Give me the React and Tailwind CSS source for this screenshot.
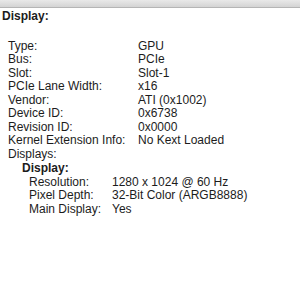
const rows = [
  ["Type:", "GPU"],
  ["Bus:", "PCIe"],
  ["Slot:", "Slot-1"],
  ["PCIe Lane Width:", "x16"],
  ["Vendor:", "ATI (0x1002)"],
  ["Device ID:", "0x6738"],
  ["Revision ID:", "0x0000"],
  ["Kernel Extension Info:", "No Kext Loaded"],
];

const displayRows = [
  ["Resolution:", "1280 x 1024 @ 60 Hz"],
  ["Pixel Depth:", "32-Bit Color (ARGB8888)"],
  ["Main Display:", "Yes"],
];

export default function App() {
  return (
    <div className="w-[300px] h-[300px] bg-white overflow-hidden text-[12px] leading-[13.5px] text-[#1c1c1c] font-['Liberation_Sans',Arial,sans-serif]">
      {/* window chrome strip */}
      <div className="h-[8px] bg-gradient-to-b from-[#e9e9e9] to-[#d4d4d4] border-b border-[#b5b5b5]" />

      <div className="pl-[2px] pt-[2px] font-bold">Display:</div>

      <div className="mt-[16px] pl-[8px]">
        {rows.map(([label, value]) => (
          <div key={label} className="flex">
            <span className="w-[130px] shrink-0">{label}</span>
            <span>{value}</span>
          </div>
        ))}
        <div>Displays:</div>
        <div className="pl-[14px] pt-[1px] font-bold">Display:</div>
        <div className="pl-[21px]">
          {displayRows.map(([label, value]) => (
            <div key={label} className="flex">
              <span className="w-[83px] shrink-0">{label}</span>
              <span>{value}</span>
            </div>
          ))}
        </div>
      </div>
    </div>
  );
}
